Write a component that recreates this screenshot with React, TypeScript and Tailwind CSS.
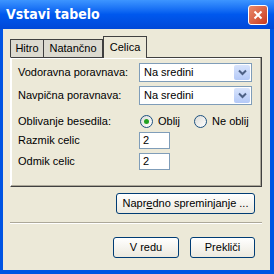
import React from 'react';

const Chevron = () => (
  <svg width="9" height="7" viewBox="0 0 9 7">
    <path d="M1 1.5 L4.5 5 L8 1.5" fill="none" stroke="#4d6185" strokeWidth="2" />
  </svg>
);

const Select = ({ value }: { value: string }) => (
  <div className="ml-auto mr-[9px] flex h-[19px] w-[113px] items-center border border-[#7f9db9] bg-white pl-[4px]">
    <span className="flex-1">{value}</span>
    <div className="m-[1px] flex h-[15px] w-[16px] items-center justify-center rounded-[2px] bg-gradient-to-b from-[#d8e4fc] to-[#b4c9f7]">
      <Chevron />
    </div>
  </div>
);

const Radio = ({ checked, label }: { checked?: boolean; label: string }) => (
  <div className="flex items-center gap-[5px]">
    <div className="flex h-[13px] w-[13px] items-center justify-center rounded-full border border-[#1c5180] bg-gradient-to-br from-[#dcdcd7] to-white">
      {checked && <div className="h-[5px] w-[5px] rounded-full bg-[#21a121]" />}
    </div>
    <span>{label}</span>
  </div>
);

const TextBox = ({ value }: { value: string }) => (
  <div className="flex h-[17px] w-[31px] items-center border border-[#7f9db9] bg-white pl-[3px]">{value}</div>
);

const Button = ({ children, w }: { children: React.ReactNode; w: string }) => (
  <button className={`${w} flex h-[21px] items-center justify-center rounded-[3px] border border-[#003c74] bg-gradient-to-b from-white to-[#ece9de] text-black`}>
    {children}
  </button>
);

export default function App() {
  return (
    <div
      className="flex h-[274px] w-[274px] flex-col bg-[#0054e3] text-[11px] text-black"
      style={{ fontFamily: '"Liberation Sans", Arial, sans-serif' }}
    >
      <div className="flex h-[29px] items-center bg-gradient-to-b from-[#3d95ff] via-[#0058ee] to-[#0048d8] pl-[6px] pr-[6px]">
        <span className="flex-1 text-[14px] font-bold text-white" style={{ fontFamily: '"DejaVu Sans Condensed", "Liberation Sans", sans-serif' }}>
          Vstavi tabelo
        </span>
        <div className="flex h-[20px] w-[20px] items-center justify-center rounded-[3px] border border-white bg-gradient-to-br from-[#e98a6c] to-[#c8371a]">
          <svg width="10" height="10" viewBox="0 0 10 10">
            <path d="M1.5 1.5 L8.5 8.5 M8.5 1.5 L1.5 8.5" stroke="white" strokeWidth="2" />
          </svg>
        </div>
      </div>

      <div className="mx-[3px] mb-[4px] mr-[4px] flex flex-1 flex-col bg-[#ece9d8] px-[7px] pt-[7px]">
        <div className="flex h-[21px] items-end">
          <div className="flex h-[18px] w-[34px] items-center justify-center border border-b-0 border-[#404040] bg-[#dcdad0]">Hitro</div>
          <div className="flex h-[18px] w-[59px] items-center justify-center border border-b-0 border-l-0 border-[#404040] bg-[#dcdad0]">Natančno</div>
          <div className="relative z-10 -mb-[1px] flex h-[22px] w-[44px] items-center justify-center border border-b-0 border-[#404040] bg-[#ece9d8]">Celica</div>
        </div>

        <div className="flex h-[130px] w-[252px] flex-col border border-l-white border-t-[#404040] border-r-[#404040] border-b-[#404040] pl-[7px] pt-[5px] shadow-[inset_-1px_-1px_0_#aca899,inset_1px_1px_0_#ffffff]">
          <div className="flex items-center">
            <span>Vodoravna poravnava:</span>
            <Select value="Na sredini" />
          </div>
          <div className="mt-[4px] flex items-center">
            <span>Navpična poravnava:</span>
            <Select value="Na sredini" />
          </div>
          <div className="mt-[7px] flex h-[18px] items-center">
            <span className="w-[122px]">Oblivanje besedila:</span>
            <Radio checked label="Oblij" />
            <div className="ml-[14px]">
              <Radio label="Ne oblij" />
            </div>
          </div>
          <div className="mt-[2px] flex items-center">
            <span className="w-[121px]">Razmik celic</span>
            <TextBox value="2" />
          </div>
          <div className="mt-[4px] flex items-center">
            <span className="w-[121px]">Odmik celic</span>
            <TextBox value="2" />
          </div>
        </div>

        <div className="mt-[6px] flex justify-end pr-[8px]">
          <Button w="w-[139px]">
            <span>
              Napr<u>e</u>dno spreminjanje ...
            </span>
          </Button>
        </div>

        <div className="mt-[8px] h-[2px] w-[252px] border-t border-b border-t-[#aca899] border-b-white" />

        <div className="mt-[13px] flex justify-end gap-[11px] pr-[8px]">
          <Button w="w-[66px]">V redu</Button>
          <Button w="w-[65px]">Prekliči</Button>
        </div>
      </div>
    </div>
  );
}
